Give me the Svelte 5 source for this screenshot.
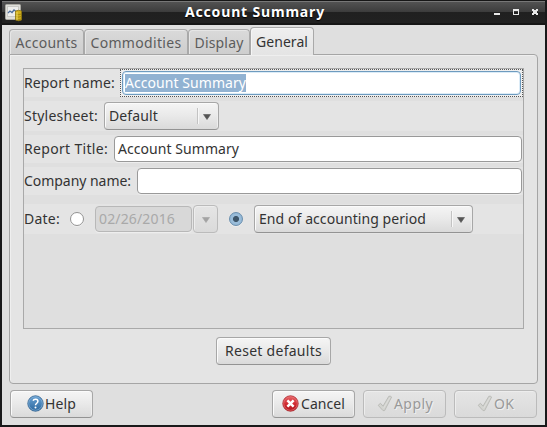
<script>
  const tabs = [
    { name: 'Accounts', box: 75, text: 62 },
    { name: 'Commodities', box: 104, text: 91 },
    { name: 'Display', box: 62, text: 49 },
    { name: 'General', box: 64, text: 52, active: true }
  ];

  // Spreads the letters so that a label takes up the given width.
  function fit(node, width) {
    const apply = () => {
      node.style.letterSpacing = '0px';
      const natural = node.getBoundingClientRect().width;
      const n = node.textContent.length;
      node.style.letterSpacing = (width - natural) / n + 'px';
    };
    apply();
    document.fonts?.ready.then(apply);
  }
</script>

{#snippet t(text, width)}<span class="t" use:fit={width}>{text}</span>{/snippet}

{#snippet arrow()}
  <svg class="arrow" width="8" height="6" viewBox="0 0 8 6"><path d="M.5 .5h7L4 5.5z" fill="currentColor" stroke="currentColor" stroke-width=".6" /></svg>
{/snippet}

{#snippet check()}
  <svg class="check" width="16" height="17" viewBox="0 0 16 17">
    <path d="M1.200 10.300 3.500 8.300 6 11.200 11.800 1.300Q13.300.7 14.600 2L7.600 15.600H6z" fill="#d3d4d0" stroke="#bbbcb8" stroke-linejoin="round" />
    <path d="M6.600 13.200 12.900 2.600" stroke="#dededc" stroke-width="1" />
  </svg>
{/snippet}

<div class="window">
  <header>
    <svg class="app" width="18" height="18" viewBox="0 0 18 18">
      <rect x=".5" y=".5" width="15" height="15" rx="1" fill="#deded9" stroke="#aaa9a3" />
      <rect x="2.5" y="2.5" width="11" height="10" fill="#eeeeec" stroke="#c9c9c5" />
      <path d="M3 9 5 7l2 1.500 2-2.500 2 1.500" fill="none" stroke="#4e6e9c" stroke-width="1.300" />
      <path d="M10.500 7q3-1.500 6 0v9q-3 1.500-6 0z" fill="#d0ae1c" stroke="#8c7510" stroke-width=".8" />
      <path d="M10.500 10q3 1.200 6 0M10.500 12.500q3 1.200 6 0M10.500 15q3 1.200 6 0" fill="none" stroke="#957b0b" stroke-width=".8" />
      <path d="M12 8v8" stroke="#f1dc62" />
    </svg>
    <h1>{@render t('Account Summary', 140)}</h1>
    <svg class="controls" width="46" height="8" viewBox="0 0 46 8">
      <path d="M0 5h6v2H0z" fill="#e8e8e8" />
      <path d="M19 1h6v6h-6zM20 3v3h4V3z" fill="#e8e8e8" fill-rule="evenodd" />
      <path d="M38 1h2v1h2V1h2v2h-1v2h1v2h-2V6h-2v1h-2V5h1V3h-1z" fill="#e8e8e8" />
    </svg>
  </header>

  <nav>
    {#each tabs as tab}
      <div class="tab" class:active={tab.active} style:width="{tab.box}px">{@render t(tab.name, tab.text)}</div>
    {/each}
  </nav>

  <main>
    <section>
      <div class="row first">
        <span class="label">{@render t('Report name:', 91)}</span>
        <div class="focus"><div class="entry"><span class="sel">{@render t('Account Summary', 121)}</span></div></div>
      </div>
      <div class="row style">
        <span class="label">{@render t('Stylesheet:', 74)}</span>
        <div class="button combo default"><span class="value">{@render t('Default', 49)}</span><i></i>{@render arrow()}</div>
      </div>
      <div class="row title">
        <span class="label">{@render t('Report Title:', 84)}</span>
        <div class="entry">{@render t('Account Summary', 121)}</div>
      </div>
      <div class="row company">
        <span class="label">{@render t('Company name:', 107)}</span>
        <div class="entry"></div>
      </div>
      <div class="row date">
        <span class="label">{@render t('Date:', 36)}</span>
        <span class="radio"></span>
        <div class="entry off">{@render t('02/26/2016', 76)}</div>
        <div class="button mini off">{@render arrow()}</div>
        <span class="radio on"></span>
        <div class="button combo period"><span class="value">{@render t('End of accounting period', 167)}</span><i></i>{@render arrow()}</div>
      </div>
    </section>
    <div class="button reset">{@render t('Reset defaults', 97)}</div>
  </main>

  <footer>
    <div class="button act help">
      <svg width="17" height="17" viewBox="0 0 17 17">
        <defs><linearGradient id="blue" x2="0" y2="1"><stop stop-color="#6ba3d4" /><stop offset="1" stop-color="#2a679e" /></linearGradient></defs>
        <circle cx="8.500" cy="8.500" r="7.700" fill="url(#blue)" stroke="#285a8a" stroke-width=".8" />
        <circle cx="8.500" cy="8.500" r="6.800" fill="none" stroke="#85b2d9" stroke-width=".7" />
        <path d="M6.100 5.700C6.700 3.700 10.900 3.700 10.900 6.300c0 1.900-2.400 2-2.400 4" fill="none" stroke="#fff" stroke-width="1.500" />
        <circle cx="8.500" cy="12.500" r="1" fill="#fff" />
      </svg>
      {@render t('Help', 31)}
    </div>
    <div class="button act cancel">
      <svg width="17" height="17" viewBox="0 0 17 17">
        <defs><linearGradient id="red" x2="0" y2="1"><stop stop-color="#e8686b" /><stop offset=".55" stop-color="#cf2930" /><stop offset="1" stop-color="#ae151d" /></linearGradient></defs>
        <circle cx="8.500" cy="8.500" r="7.700" fill="url(#red)" stroke="#a61c23" stroke-width=".8" />
        <circle cx="8.500" cy="8.500" r="6.800" fill="none" stroke="#e77779" stroke-width=".7" />
        <path d="m5.400 5.400 6.200 6.200m0-6.200-6.200 6.200" stroke="#fff" stroke-width="2.500" />
      </svg>
      {@render t('Cancel', 44)}
    </div>
    <div class="button act apply off">{@render check()}{@render t('Apply', 39)}</div>
    <div class="button act ok off">{@render check()}{@render t('OK', 20)}</div>
  </footer>
</div>

<style>
  .window, .window * { box-sizing: border-box; }
  .window {
    width: 547px; height: 427px; overflow: hidden;
    border: solid #19191a; border-width: 0 2px 2px;
    background: #dfdfdf; color: #333;
    font: 14px/28px "Noto Sans", "Open Sans", sans-serif;
    display: flex; flex-direction: column;
  }
  .t { white-space: pre; display: inline-block; flex: none; }
  header {
    height: 25px; flex: none; margin: 0 -1px; padding: 0 4px 0 3px;
    display: flex; align-items: flex-start;
    border-top: 1px solid #161616; border-bottom: 2px solid #161616;
    background: linear-gradient(#777 0 1px, #525252 1px, #3c3c3c 11px, #202020 11px, #212121);
  }
  .app { margin: 3px 0 0 1px; flex: none; }
  h1 { margin: 0 0 0 162px; font-size: 14px; font-weight: 700; line-height: 22px; color: #fff; text-shadow: 0 1px 1px #000; width: 140px; }
  .controls { margin: 7px 0 0 169px; flex: none; }

  nav { height: 29px; flex: none; padding: 2px 0 0 7px; display: flex; align-items: flex-end; }
  .tab {
    height: 25px; flex: none; line-height: 26px; color: #5c5c5c;
    border: 1px solid #a9a9a9; border-bottom: 0; border-radius: 4px 4px 0 0;
    background: linear-gradient(#dadada, #cecece); box-shadow: inset 1px 1px #e6e6e6;
    display: flex; justify-content: center;
  }
  .tab.active {
    height: 28px; margin-bottom: -1px; line-height: 28px; color: #333; z-index: 1;
    background: linear-gradient(#efefef, #e4e4e4); box-shadow: inset 1px 1px #f5f5f5;
  }
  main {
    margin: 0 7px; height: 330px; flex: none; padding: 13px 13px 0;
    border: 1px solid #a5a5a5; border-radius: 0 4px 4px 4px; background: #e4e4e4;
    box-shadow: inset 1px 1px #efefef;
    display: flex; flex-direction: column;
  }
  section { height: 261px; flex: none; border: 1px solid #a9a9a9; background: #dfdfdf; }
  .row { height: 28px; display: flex; align-items: center; background: #e4e4e4; }
  .label { white-space: nowrap; height: 28px; display: flex; flex: none; }
  .first { margin-bottom: 4px; }
  .first .label { width: 96px; }
  .focus { flex: 1; height: 28px; padding: 1px; border: 1px dotted #555; display: flex; background: #efefef; }
  .entry {
    flex: 1; height: 26px; line-height: 24px; padding-left: 3px;
    background: #fff; border: 1px solid #999; border-radius: 4px; color: #333;
    box-shadow: 0 1px #eee; display: flex;
  }
  .focus .entry { height: 24px; padding: 1px 2px; border-color: #6e9bbf; box-shadow: inset 0 0 0 1px #dcecf7; }
  .sel { background: #91b2d2; color: #fff; height: 18px; width: 121px; margin-top: 1px; line-height: 18px; display: flex; }
  .style { height: 30px; margin-bottom: 4px; }
  .style .label { width: 80px; }
  .title { margin-bottom: 4px; }
  .title .label { width: 90px; }
  .title .entry, .company .entry { margin-right: 1px; }
  .company .label { width: 113px; }
  .company { margin-bottom: 9px; }
  .date { height: 30px; }
  .date .label { width: 46px; }

  .button {
    height: 28px; line-height: 26px; flex: none; display: flex; align-items: center;
    border: 1px solid #a7a7a7; border-bottom-color: #939393; border-radius: 4px;
    background: linear-gradient(#f5f5f5, #e9e9e9 50%, #dadada);
    box-shadow: inset 1px 1px #fbfbfb, inset -1px 0 #eee;
  }
  .combo { padding: 0 7px 0 4px; }
  .value { flex: 1; display: flex; }
  .combo i { width: 2px; height: 16px; background: linear-gradient(90deg, #c3c3c3 50%, #f7f7f7 50%); margin-right: 4px; }
  .default { width: 115px; }
  .period { width: 219px; margin-left: 11px; }
  .arrow { color: #555; margin-top: 1px; flex: none; }
  .radio {
    width: 14px; height: 14px; border-radius: 50%; flex: none;
    border: 1px solid #929292; background: #fff; box-shadow: 0 1px #eee;
  }
  .radio.on {
    margin-left: 11px; border-color: #6a8fae;
    background: radial-gradient(circle, #3e566a 0 2.6px, #99bcd9 3.5px 5px, #78a4c8);
  }
  .entry.off { flex: none; width: 97px; margin-left: 11px; background: #d8d8d8; border-color: #b8b8b8; color: #a9a9a9; }
  .mini { width: 25px; margin-left: 1px; justify-content: center; }
  .button.off { color: #999; border-color: #bbb; background: linear-gradient(#e5e5e5, #dadada); box-shadow: inset 1px 1px #ededed; text-shadow: 1px 1px #f1f1f1; }
  .mini .arrow { color: #a3a3a3; }
  .reset { width: 115px; align-self: center; margin-top: 8px; justify-content: center; }

  footer { display: flex; padding: 6px 8px; }
  .act { width: 83px; }
  .act svg { flex: none; margin-bottom: 2px; }
  .help { padding-left: 16px; gap: 1px; }
  .cancel { margin-left: 179px; padding-left: 9px; gap: 2px; }
  .apply { margin-left: 8px; padding-left: 13px; gap: 1px; }
  .ok { margin-left: 8px; padding-left: 22px; gap: 1px; }
</style>
